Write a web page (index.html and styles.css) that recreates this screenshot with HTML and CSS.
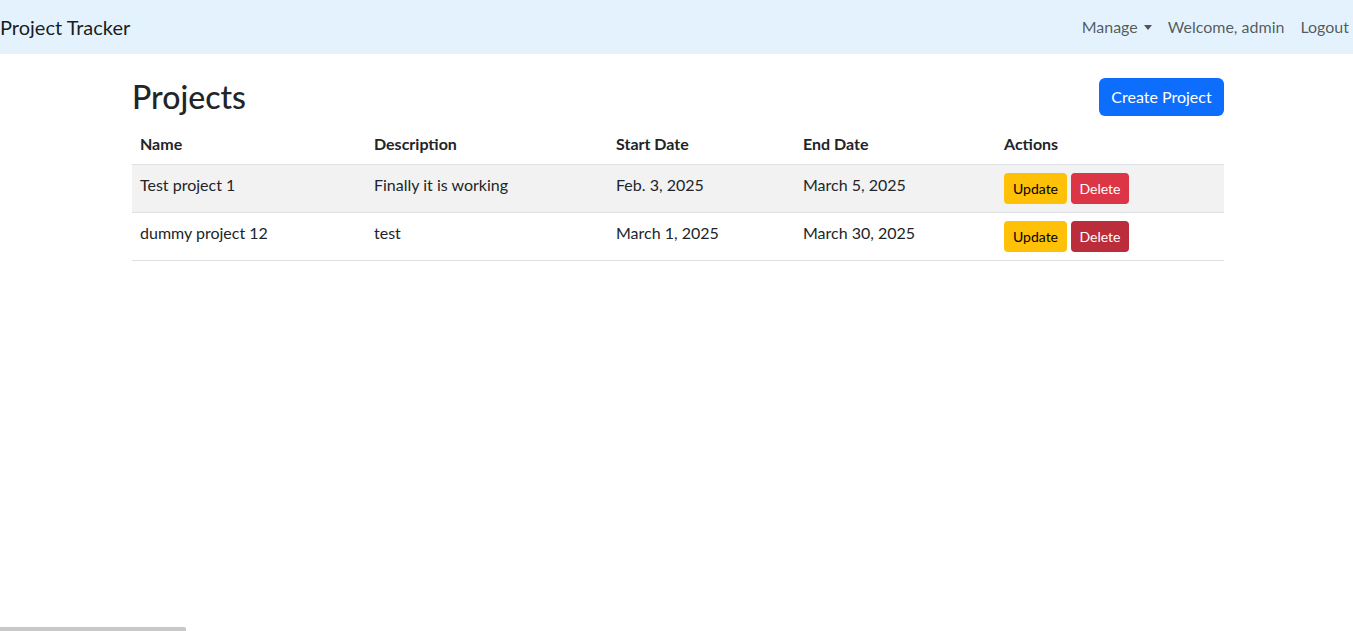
FILE: index.html
```html
<!DOCTYPE html>
<html lang="en">
<head>
<meta charset="utf-8">
<title>Project Tracker</title>
<link rel="stylesheet" href="styles.css">
</head>
<body>
<nav class="navbar">
  <a class="brand" href="#">Project Tracker</a>
  <div class="nav-links">
    <a class="nav-link dropdown-toggle" href="#">Manage</a>
    <a class="nav-link" href="#">Welcome, admin</a>
    <a class="nav-link" href="#">Logout</a>
  </div>
</nav>
<main class="container">
  <div class="page-head">
    <h2 class="page-title">Projects</h2>
    <a class="btn btn-primary" href="#">Create Project</a>
  </div>
  <table class="table">
    <colgroup>
      <col class="col-name"><col class="col-desc"><col class="col-start"><col class="col-end"><col class="col-actions">
    </colgroup>
    <thead>
      <tr><th>Name</th><th>Description</th><th>Start Date</th><th>End Date</th><th>Actions</th></tr>
    </thead>
    <tbody>
      <tr class="striped">
        <td>Test project 1</td><td>Finally it is working</td><td>Feb. 3, 2025</td><td>March 5, 2025</td>
        <td><div class="actions"><a class="btn-sm btn-warning" href="#">Update</a><a class="btn-sm btn-danger" href="#">Delete</a></div></td>
      </tr>
      <tr>
        <td>dummy project 12</td><td>test</td><td>March 1, 2025</td><td>March 30, 2025</td>
        <td><div class="actions"><a class="btn-sm btn-warning" href="#">Update</a><a class="btn-sm btn-danger btn-danger-hover" href="#">Delete</a></div></td>
      </tr>
    </tbody>
  </table>
</main>
<div class="scroll-thumb"></div>
</body>
</html>
```
FILE: styles.css
```css
* { box-sizing: border-box; }
html, body { margin: 0; padding: 0; }
body {
  font-family: Lato, "Noto Sans", sans-serif;
  font-size: 16px;
  line-height: 1.5;
  color: #212529;
  background: #fff;
}
a { text-decoration: none; }

.navbar {
  height: 54px;
  background: #e3f2fd;
  display: flex;
  align-items: center;
  justify-content: space-between;
}
.brand {
  font-size: 20px;
  line-height: 30px;
  color: rgba(0, 0, 0, 0.9);
}
.nav-links {
  display: flex;
  align-items: center;
  gap: 16px;
  margin-right: 4px;
}
.nav-link {
  color: rgba(0, 0, 0, 0.65);
  line-height: 24px;
}
.dropdown-toggle::after {
  content: "";
  display: inline-block;
  margin-left: 6px;
  vertical-align: 3px;
  border-top: 5px solid;
  border-left: 4px solid transparent;
  border-right: 4px solid transparent;
}

.container {
  width: 1092px;
  margin-left: 132px;
}
.page-head {
  display: flex;
  align-items: center;
  justify-content: space-between;
  margin-top: 24px;
  margin-bottom: 8px;
}
.page-title {
  margin: 0;
  font-size: 32px;
  font-weight: 500;
  line-height: 38px;
}
.btn {
  display: inline-block;
  width: 125px;
  height: 38px;
  line-height: 36px;
  text-align: center;
  border: 1px solid transparent;
  border-radius: 6px;
  font-size: 16px;
}
.btn-primary {
  background: #0d6efd;
  color: #fff;
}

.table {
  width: 100%;
  border-collapse: collapse;
}
.col-name { width: 234px; }
.col-desc { width: 242px; }
.col-start { width: 187px; }
.col-end { width: 201px; }
.col-actions { width: 228px; }
.table th, .table td {
  padding: 8px;
  text-align: left;
  vertical-align: top;
  border-bottom: 1px solid #dee2e6;
  line-height: 24px;
}
.table th { font-weight: 700; }
.table tr.striped td { background: #f2f2f2; }

.actions {
  display: flex;
  gap: 4px;
}
.btn-sm {
  display: inline-block;
  height: 31px;
  line-height: 29px;
  padding: 0;
  text-align: center;
  font-size: 14px;
  border: 1px solid transparent;
  border-radius: 4px;
}
.btn-warning {
  width: 63px;
  background: #ffc107;
  color: #000;
}
.btn-danger {
  width: 58px;
  background: #dc3545;
  color: #fff;
}
.btn-danger-hover { background: #bb2d3b; }

.scroll-thumb {
  position: fixed;
  left: 0;
  bottom: 0;
  width: 186px;
  height: 4px;
  background: #c8c8c8;
  border-radius: 0 2px 0 0;
}
```
